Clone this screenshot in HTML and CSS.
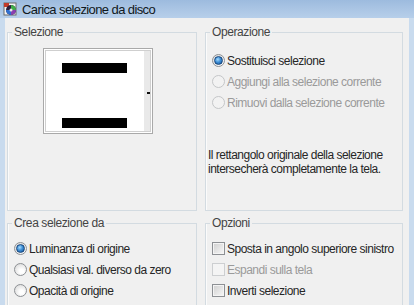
FILE: index.html
```html
<!DOCTYPE html>
<html>
<head>
	<title>Carica selezione da disco</title>
	<meta charset="UTF-8">
	<link rel="stylesheet" href="styles.css">
</head>
<body>

    <div class="window">
        <div class="titlebar">
            <svg class="app-icon" width="15" height="14" viewBox="0 0 15 14">
                <rect x="1" y="1" width="12" height="12" fill="#f4f4f4" stroke="#6b6b6b" stroke-width="1"/>
                <rect x="1" y="1" width="5" height="4" fill="#c23a2a"/>
                <circle cx="8" cy="8" r="5" fill="#2b1f3a"/>
                <path d="M8 8 L8 3 A5 5 0 0 1 13 8 Z" fill="#3fae4a"/>
                <path d="M8 8 L13 8 A5 5 0 0 1 8 13 Z" fill="#8a3fb0"/>
                <path d="M8 8 L8 13 A5 5 0 0 1 3 8 Z" fill="#2f6fd1"/>
                <circle cx="8" cy="8" r="1.5" fill="#e8e8e8"/>
            </svg>
            <span class="title">Carica selezione da disco</span>
        </div>

        <div class="frame">
            <div class="panels">

                <fieldset class="group top">
                    <legend>Selezione</legend>
                    <div class="preview">
                        <div class="canvas">
                            <div class="bar"></div>
                            <div class="bar"></div>
                        </div>
                        <div class="vscroll"><span class="thumb"></span></div>
                    </div>
                </fieldset>

                <fieldset class="group top">
                    <legend>Operazione</legend>
                    <div class="options first">
                        <div class="opt"><span class="radio checked"></span>Sostituisci selezione</div>
                        <div class="opt disabled"><span class="radio"></span>Aggiungi alla selezione corrente</div>
                        <div class="opt disabled"><span class="radio"></span>Rimuovi dalla selezione corrente</div>
                    </div>
                    <p class="note">Il rettangolo originale della selezione<br>intersecherà completamente la tela.</p>
                </fieldset>

                <fieldset class="group bottom">
                    <legend>Crea selezione da</legend>
                    <div class="options">
                        <div class="opt"><span class="radio checked"></span>Luminanza di origine</div>
                        <div class="opt"><span class="radio"></span>Qualsiasi val. diverso da zero</div>
                        <div class="opt"><span class="radio"></span>Opacità di origine</div>
                    </div>
                </fieldset>

                <fieldset class="group bottom">
                    <legend>Opzioni</legend>
                    <div class="options">
                        <div class="opt"><span class="check"></span>Sposta in angolo superiore sinistro</div>
                        <div class="opt disabled"><span class="check"></span>Espandi sulla tela</div>
                        <div class="opt"><span class="check"></span>Inverti selezione</div>
                    </div>
                </fieldset>

            </div>
        </div>
    </div>

</body>
</html>
```

FILE: styles.css
```css
*{
	font-family: "Liberation Sans", Arial, sans-serif;
	box-sizing: border-box;
}
body{
	margin: 0;
	width: 414px;
	height: 305px;
	overflow: hidden;
	background: #f0f0f0;
}
.window{
	display: flex;
	flex-direction: column;
	height: 305px;
}
.titlebar{
	height: 18px;
	display: flex;
	align-items: center;
	gap: 4px;
	padding-left: 3px;
	background: linear-gradient(#9dbbde, #b7cfea);
}
.app-icon{
	flex: none;
}
.title{
	font-size: 13px;
	letter-spacing: -0.6px;
	color: #101820;
}
.frame{
	flex: 1;
	overflow: hidden;
	background: #f0f0f0;
	border-left: 5px solid #c9dbee;
	border-right: 5px solid #c9dbee;
	padding: 7px 6px 0 2px;
}
.panels{
	display: grid;
	grid-template-columns: 190px 198px;
	grid-template-rows: 186px 120px;
	column-gap: 8px;
	row-gap: 5px;
}
.group{
	margin: 0;
	padding: 0;
	border: 1px solid #d3dbe1;
	box-shadow: inset 1px 0 0 #fbfbfb;
	height: 100%;
	min-width: 0;
}
.group legend{
	margin-left: 4px;
	padding: 0 2px;
	font-size: 12px;
	line-height: 14px;
	letter-spacing: -0.4px;
	color: #444;
}
.preview{
	margin: 9px 0 0 35px;
	width: 110px;
	height: 86px;
	border: 1px solid #a9a9a9;
	padding: 1px;
	background: #fff;
	display: flex;
}
.canvas{
	flex: 1;
	display: flex;
	flex-direction: column;
	gap: 45px;
	padding: 12px 0 0 16px;
	border: 1px solid #cfcfcf;
	border-right: none;
	background: #fff;
}
.bar{
	width: 65px;
	height: 10px;
	background: #000;
}
.vscroll{
	width: 7px;
	background: #e9e9e9;
	border: 1px solid #cfcfcf;
	border-left: none;
	display: flex;
	flex-direction: column;
	align-items: flex-end;
	padding-top: 41px;
}
.thumb{
	width: 3px;
	height: 2px;
	background: #111;
}
.options{
	display: flex;
	flex-direction: column;
	padding-left: 6px;
	margin-top: 8px;
}
.options.first{
	margin-top: 11px;
}
.opt{
	height: 21px;
	display: flex;
	align-items: center;
	gap: 2px;
	font-size: 12px;
	letter-spacing: -0.5px;
	color: #262626;
}
.opt.disabled{
	color: #9a9a9a;
}
.radio{
	width: 13px;
	height: 13px;
	border-radius: 50%;
	border: 1px solid #8d9094;
	background: radial-gradient(circle at 60% 65%, #ffffff 20%, #d8d8d8 90%);
	display: flex;
	align-items: center;
	justify-content: center;
	flex: none;
}
.radio.checked::after{
	content: "";
	width: 7px;
	height: 7px;
	border-radius: 50%;
	border: 1px solid #17457a;
	background: radial-gradient(circle at 40% 35%, #a6dcff 0%, #3f8fd6 45%, #0f4f94 100%);
}
.disabled .radio{
	border-color: #c4c6c8;
	background: #f2f2f2;
}
.check{
	width: 13px;
	height: 13px;
	border: 1px solid #8d9094;
	background: linear-gradient(135deg, #cfcfcf, #f8f8f8);
	box-shadow: inset 0 0 0 1px #f4f4f4;
	flex: none;
}
.disabled .check{
	border-color: #cdcfd1;
	background: #f4f4f4;
}
.note{
	margin: 35px 0 0 2px;
	font-size: 12px;
	line-height: 14px;
	letter-spacing: -0.5px;
	color: #262626;
}
```
